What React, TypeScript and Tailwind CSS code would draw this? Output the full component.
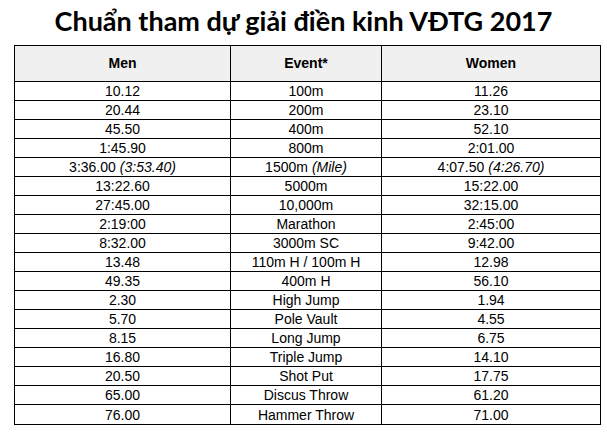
const rows: [string, string, string, string?, string?, string?][] = [
  ['10.12', '100m', '11.26'],
  ['20.44', '200m', '23.10'],
  ['45.50', '400m', '52.10'],
  ['1:45.90', '800m', '2:01.00'],
  ['3:36.00', '1500m', '4:07.50', '(3:53.40)', '(Mile)', '(4:26.70)'],
  ['13:22.60', '5000m', '15:22.00'],
  ['27:45.00', '10,000m', '32:15.00'],
  ['2:19:00', 'Marathon', '2:45:00'],
  ['8:32.00', '3000m SC', '9:42.00'],
  ['13.48', '110m H / 100m H', '12.98'],
  ['49.35', '400m H', '56.10'],
  ['2.30', 'High Jump', '1.94'],
  ['5.70', 'Pole Vault', '4.55'],
  ['8.15', 'Long Jump', '6.75'],
  ['16.80', 'Triple Jump', '14.10'],
  ['20.50', 'Shot Put', '17.75'],
  ['65.00', 'Discus Throw', '61.20'],
  ['76.00', 'Hammer Throw', '71.00'],
];

function Cell({ main, extra, last }: { main: string; extra?: string; last?: boolean }) {
  return (
    <div className={`flex items-center justify-center ${last ? '' : 'border-r border-black'}`}>
      {main}
      {extra && <i className="ml-1">{extra}</i>}
    </div>
  );
}

export default function App() {
  return (
    <div className="w-[607px] h-[433px] bg-white overflow-hidden">
      <h1 className="h-[45px] flex items-center justify-center text-[27px] font-bold text-black pb-[2px]" style={{ fontFamily: 'Lato, sans-serif' }}>
        Chuẩn tham dự giải điền kinh VĐTG 2017
      </h1>
      <div className="ml-[14px] w-[587px] border border-black text-[14px] text-black" style={{ fontFamily: '"Liberation Sans", Arial, sans-serif' }}>
        <div className="grid grid-cols-[216px_151px_1fr] h-[36px] bg-[#f0f0f0] font-bold border-b border-black">
          <Cell main="Men" />
          <Cell main="Event*" />
          <Cell main="Women" last />
        </div>
        {rows.map((r, i) => (
          <div key={i} className={`grid grid-cols-[216px_151px_1fr] h-[19px] leading-none ${i < rows.length - 1 ? 'border-b border-black' : ''}`}>
            <Cell main={r[0]} extra={r[3]} />
            <Cell main={r[1]} extra={r[4]} />
            <Cell main={r[2]} extra={r[5]} last />
          </div>
        ))}
      </div>
    </div>
  );
}
